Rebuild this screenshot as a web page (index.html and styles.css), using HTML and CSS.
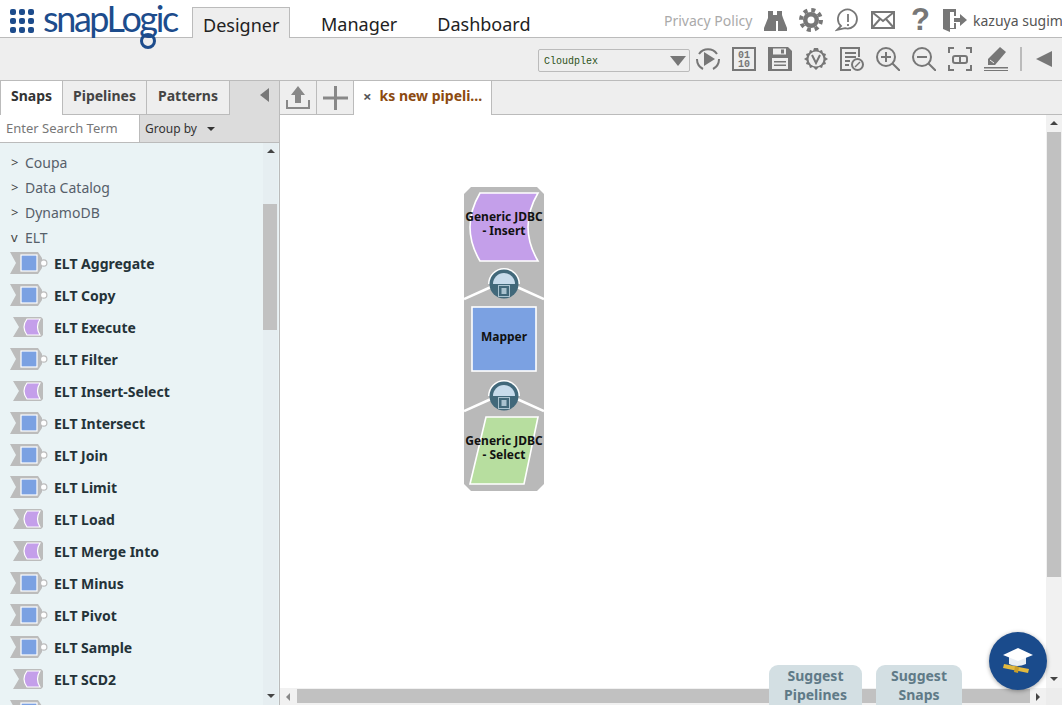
FILE: index.html
```html
<!DOCTYPE html>
<html lang="en">
<head>
<meta charset="utf-8">
<title>SnapLogic Designer</title>
<link rel="stylesheet" href="styles.css">
</head>
<body>
<svg class="defs" width="0" height="0">
  <defs>
    <symbol id="snap-blue" viewBox="0 0 38 24">
      <path d="M0 1H28L32 7V17L28 23H0L6 12Z" fill="#bcbcbc"/>
      <circle cx="33.700" cy="12" r="3.200" fill="#fff" stroke="#bcbcbc" stroke-width="1.200"/>
      <rect x="11" y="4" width="16" height="16" fill="#7ba1e2" stroke="#fff" stroke-width="1.200"/>
    </symbol>
    <symbol id="snap-purple" viewBox="0 0 38 24">
      <path d="M3 2H31L33 4V20L31 22H3L9 12Z" fill="#bcbcbc"/>
      <path d="M17 4H30Q25 12 30 20H17Q11 12 17 4Z" fill="#c49fea" stroke="#fff" stroke-width="1.200"/>
    </symbol>
  </defs>
</svg>

<header class="top">
  <div class="logo">
    <svg class="logo-dots" width="24" height="24" viewBox="0 0 24 24" fill="#1d4c8c">
      <rect x="0" y="0" width="6" height="6" rx="2"/><rect x="9" y="0" width="6" height="6" rx="2"/><rect x="18" y="0" width="6" height="6" rx="2"/>
      <rect x="0" y="9" width="6" height="6" rx="2"/><rect x="9" y="9" width="6" height="6" rx="2"/><rect x="18" y="9" width="6" height="6" rx="2"/>
      <rect x="0" y="18" width="6" height="6" rx="2"/><rect x="9" y="18" width="6" height="6" rx="2"/><rect x="18" y="18" width="6" height="6" rx="2"/>
    </svg>
    <span class="logo-word">snapLogic</span>
    <svg class="logo-ring" width="20" height="20" viewBox="0 0 20 20" fill="none" stroke="#1d4c8c" stroke-width="3"><circle cx="10" cy="10" r="6.500"/></svg>
  </div>
  <nav class="main-nav">
    <span class="main-tab active">Designer</span>
    <span class="main-tab manager">Manager</span>
    <span class="main-tab">Dashboard</span>
  </nav>
  <div class="top-right">
    <span class="privacy">Privacy Policy</span>
    <svg class="ic" width="24" height="24" viewBox="0 0 24 24" fill="#777"><path d="M5 3h5v4h4V3h5v4l1 3 4 10v3h-9V13h-2v10H1v-3l4-10z"/></svg>
    <svg class="ic" width="24" height="24" viewBox="0 0 24 24"><circle cx="12" cy="12" r="8" fill="#777"/><circle cx="12" cy="12" r="10" fill="none" stroke="#777" stroke-width="4" stroke-dasharray="4 3.850"/><circle cx="12" cy="12" r="3.500" fill="#fff"/></svg>
    <svg class="ic" width="24" height="24" viewBox="0 0 24 24" fill="none" stroke="#777" stroke-width="1.800"><path d="M6 18a9.500 9.500 0 1 1 4 2.200L2 22z"/><path d="M13 6v8M13 16v2"/></svg>
    <svg class="ic" width="24" height="24" viewBox="0 0 24 24" fill="none" stroke="#777" stroke-width="2"><rect x="1" y="4" width="22" height="16"/><path d="M1 4l11 9 11-9M1 20l8-9M23 20l-8-9"/></svg>
    <span class="qmark">?</span>
    <svg class="ic" width="24" height="24" viewBox="0 0 24 24" fill="#777"><path d="M0 1h13v7h-2V4H7v16h4v-5h2v6H7v3l-7-3z"/><path d="M11 10h6V6l7 6-7 6v-4h-6z"/></svg>
    <span class="user">kazuya sugimoto</span>
  </div>
</header>

<div class="toolbar">
  <div class="select"><span class="select-text">Cloudplex</span><i class="select-arrow"></i></div>
  <svg class="tool" viewBox="0 0 24 24" fill="none" stroke="#777" stroke-width="2"><path d="M3 7A11 11 0 0 1 21 7M23 12a11 11 0 0 1-6 10M7 22a11 11 0 0 1-6-10"/><path d="M8 5l11 7-11 7z" fill="#777" stroke="none"/></svg>
  <svg class="tool" viewBox="0 0 24 24"><rect x="1" y="1" width="22" height="22" fill="none" stroke="#777" stroke-width="2"/><text x="12" y="11" class="bin">01</text><text x="12" y="20" class="bin">10</text></svg>
  <svg class="tool" viewBox="0 0 24 24" fill="#777"><path d="M0 0h20l4 4v20H0z"/><rect x="5" y="1.500" width="13" height="6" fill="#eee"/><rect x="13" y="2.500" width="3" height="4" fill="#777"/><rect x="4" y="11" width="16" height="11" fill="#eee"/><path d="M6 14h12v1.500H6zM6 17.500h12V19H6z"/></svg>
  <svg class="tool" viewBox="0 0 24 24"><path d="M10 1h4l1 3 3-1 1 3 3 1-1 3 3 2-3 2 1 3-3 1-1 3-3-1-3 3-3-3-3 1-1-3-3-1 1-3-3-2 3-2-1-3 3-1 1-3 3 1z" fill="#777"/><circle cx="12" cy="12" r="7.500" fill="#eee"/><path d="M8 8l4 8 4-8" fill="none" stroke="#777" stroke-width="2"/></svg>
  <svg class="tool" viewBox="0 0 24 24" fill="none" stroke="#777" stroke-width="2"><path d="M11 23H1V1h18v9"/><path d="M5 6h11M5 10h11M5 14h5M5 18h4"/><circle cx="17.500" cy="17.500" r="5.500" fill="#eee"/><path d="M15 20l5-5" stroke-width="1.500"/></svg>
  <svg class="tool" viewBox="0 0 24 24" fill="none" stroke="#777" stroke-width="2"><circle cx="10" cy="10" r="9"/><path d="M10 5v10M5 10h10M16.500 16.500L24 24"/></svg>
  <svg class="tool" viewBox="0 0 24 24" fill="none" stroke="#777" stroke-width="2"><circle cx="10" cy="10" r="9"/><path d="M5 10h10M16.500 16.500L24 24"/></svg>
  <svg class="tool" viewBox="0 0 24 24" fill="none" stroke="#777" stroke-width="2"><path d="M1 6V1h5M18 1h5v5M23 18v5h-5M6 23H1v-5"/><rect x="5" y="9" width="14" height="7" rx="2"/><path d="M12 9v7"/></svg>
  <svg class="tool" viewBox="0 0 24 24" fill="#777"><path d="M16 0l6 5-11 13H4v-6z"/><path d="M0 20h24v1.500H0zM0 23h24v1H0z"/><path d="M6 13l4 3" stroke="#eee" stroke-width="1"/></svg>
  <span class="tool-sep"></span>
  <span class="tool-back"></span>
</div>

<main class="workspace">
  <aside class="panel">
    <div class="panel-tabs">
      <span class="panel-tab active">Snaps</span>
      <span class="panel-tab pipelines">Pipelines</span>
      <span class="panel-tab patterns">Patterns</span>
      <span class="panel-collapse"></span>
    </div>
    <div class="search-row">
      <span class="search">Enter Search Term</span>
      <span class="groupby">Group by <i class="mini-arrow"></i></span>
    </div>
    <div class="list-wrap">
      <ul class="list">
        <li class="cat"><span class="chev">&gt;</span>Coupa</li>
        <li class="cat"><span class="chev">&gt;</span>Data Catalog</li>
        <li class="cat"><span class="chev">&gt;</span>DynamoDB</li>
        <li class="cat"><span class="chev">v</span>ELT</li>
        <li class="snap"><svg class="snap-ic"><use href="#snap-blue"/></svg>ELT Aggregate</li>
        <li class="snap"><svg class="snap-ic"><use href="#snap-blue"/></svg>ELT Copy</li>
        <li class="snap"><svg class="snap-ic"><use href="#snap-purple"/></svg>ELT Execute</li>
        <li class="snap"><svg class="snap-ic"><use href="#snap-blue"/></svg>ELT Filter</li>
        <li class="snap"><svg class="snap-ic"><use href="#snap-purple"/></svg>ELT Insert-Select</li>
        <li class="snap"><svg class="snap-ic"><use href="#snap-blue"/></svg>ELT Intersect</li>
        <li class="snap"><svg class="snap-ic"><use href="#snap-blue"/></svg>ELT Join</li>
        <li class="snap"><svg class="snap-ic"><use href="#snap-blue"/></svg>ELT Limit</li>
        <li class="snap"><svg class="snap-ic"><use href="#snap-purple"/></svg>ELT Load</li>
        <li class="snap"><svg class="snap-ic"><use href="#snap-purple"/></svg>ELT Merge Into</li>
        <li class="snap"><svg class="snap-ic"><use href="#snap-blue"/></svg>ELT Minus</li>
        <li class="snap"><svg class="snap-ic"><use href="#snap-blue"/></svg>ELT Pivot</li>
        <li class="snap"><svg class="snap-ic"><use href="#snap-blue"/></svg>ELT Sample</li>
        <li class="snap"><svg class="snap-ic"><use href="#snap-purple"/></svg>ELT SCD2</li>
        <li class="snap"><svg class="snap-ic"><use href="#snap-blue"/></svg></li>
      </ul>
      <div class="list-scroll">
        <i class="arr up"></i>
        <i class="list-thumb"></i>
        <i class="arr down"></i>
      </div>
    </div>
  </aside>

  <section class="editor">
    <div class="doc-tabs">
      <span class="doc-btn">
        <svg width="26" height="24" viewBox="0 0 26 24" fill="#888"><path d="M13 0l7 9h-4v8h-6V9H6z"/><path d="M1 14v9h24v-9h-2v7H3v-7z"/></svg>
      </span>
      <span class="doc-btn">
        <svg width="25" height="24" viewBox="0 0 25 24" fill="#888"><rect x="11" y="0" width="3" height="24"/><rect x="0" y="10.500" width="25" height="3"/></svg>
      </span>
      <span class="doc-tab"><span class="doc-x">×</span>ks new pipeli...</span>
    </div>
    <div class="canvas-row">
      <div class="canvas">
        <svg class="pipeline" width="80" height="304" viewBox="0 0 80 304">
          <path d="M7 0H73L80 7V297L73 304H7L0 297V7Z" fill="#b9b9b9"/>
          <path d="M16 6H74Q54 40 74 74H16Q-4 40 16 6Z" fill="#c49fea" stroke="#fff" stroke-width="1.600"/>
          <text x="40" y="34" class="node-label">Generic JDBC</text>
          <text x="40" y="48" class="node-label">- Insert</text>
          <path d="M0 112L27 100M53 100L80 112" stroke="#fff" stroke-width="2.500"/>
          <path d="M24 97a16 16 0 0 1 32 0z" fill="#fff"/>
          <circle cx="40" cy="97" r="14.500" fill="#41687a"/>
          <path d="M29 97a11 11 0 0 1 22 0z" fill="#c7dbeb"/>
          <rect x="34.500" y="98.500" width="11" height="11" fill="#41687a" stroke="#a9c2cf"/>
          <rect x="37.500" y="101" width="5" height="6" fill="#a9c2cf"/>
          <rect x="8" y="120" width="64" height="64" fill="#7ba1e2" stroke="#fff" stroke-width="1.600"/>
          <text x="40" y="154" class="node-label">Mapper</text>
          <path d="M0 224L27 212M53 212L80 224" stroke="#fff" stroke-width="2.500"/>
          <path d="M24 209a16 16 0 0 1 32 0z" fill="#fff"/>
          <circle cx="40" cy="209" r="14.500" fill="#41687a"/>
          <path d="M29 209a11 11 0 0 1 22 0z" fill="#c7dbeb"/>
          <rect x="34.500" y="210.500" width="11" height="11" fill="#41687a" stroke="#a9c2cf"/>
          <rect x="37.500" y="213" width="5" height="6" fill="#a9c2cf"/>
          <path d="M22 230H74L60 297H6Z" fill="#b7de9f" stroke="#fff" stroke-width="1.600"/>
          <text x="40" y="258" class="node-label">Generic JDBC</text>
          <text x="40" y="272" class="node-label">- Select</text>
        </svg>
      </div>
      <div class="v-scroll">
        <i class="arr up"></i>
        <i class="v-thumb"></i>
        <i class="arr down"></i>
      </div>
    </div>
    <div class="h-scroll">
      <i class="arr left"></i>
      <i class="h-thumb"></i>
      <i class="arr right"></i>
      <i class="corner"></i>
    </div>
    <div class="suggest">
      <span class="suggest-btn pipe">Suggest<br>Pipelines</span>
      <span class="suggest-btn">Suggest<br>Snaps</span>
    </div>
    <div class="help">
      <svg width="32" height="28" viewBox="0 0 32 28"><path d="M2 17l25 5-1 4-25-5z" fill="#e2b93f"/><path d="M13 19l4 1-1 6-4-1z" fill="#c99e2a"/><path d="M7 9v8q8 4 17 0V9z" fill="#e8eef5"/><path d="M16 1L31 8 16 14 1 8z" fill="#fff"/></svg>
    </div>
  </section>
</main>
</body>
</html>
```
FILE: styles.css
```css
* { box-sizing: border-box; }
html, body { margin: 0; height: 705px; overflow: hidden; background: #fff; }
body { font-family: "Noto Sans", sans-serif; color: #222; display: flex; flex-direction: column; width: 1062px; }
.defs { display: block; height: 0; }
i { display: block; }

.top { height: 38px; flex: none; display: flex; align-items: flex-end; border-bottom: 1px solid #bbb; background: #fff; }
.logo { width: 192px; flex: none; position: relative; height: 37px; display: flex; padding-left: 10px; }
.logo-dots { margin-top: 9px; flex: none; }
.logo-word { font-family: "Lato", sans-serif; color: #1d4c8c; font-size: 36px; line-height: 37px; letter-spacing: -2.400px; margin-left: 9px; white-space: nowrap; }
.logo-ring { position: absolute; left: 138px; top: 31px; }
.main-nav { display: flex; align-items: flex-end; height: 31px; margin-bottom: -1px; }
.main-tab { font-size: 18px; line-height: 24px; padding: 5px 0 2px; color: #222; margin-left: 40px; }
.main-tab.active { width: 98px; height: 31px; background: #eee; border: 1px solid #bbb; border-bottom: 0; margin: 0; padding: 5px 0 0 10px; }
.main-tab.manager { margin-left: 31px; }
.top-right { margin-left: auto; display: flex; align-items: center; height: 37px; white-space: nowrap; overflow: hidden; width: 398px; flex: none; padding-top: 2px; align-self: flex-start; }
.privacy { font-size: 14px; color: #aaa; width: 99px; flex: none; padding-top: 2px; }
.ic { flex: none; margin-right: 12px; }
.qmark { font-size: 31px; font-weight: 700; color: #777; width: 16px; margin-right: 16px; line-height: 24px; font-family: "Liberation Sans", sans-serif; flex: none; margin-left: 4px; }
.user { font-size: 14px; color: #555; margin-left: -6px; padding-top: 2px; }

.toolbar { height: 43px; flex: none; background: #eee; display: flex; align-items: center; padding-left: 538px; gap: 12px; border-bottom: 1px solid #bbb; }
.select { width: 152px; height: 23px; background: #eee; border: 1px solid #bbb; border-radius: 2px; display: flex; align-items: center; justify-content: space-between; padding: 0 0 0 5px; font: 10px "Liberation Mono", monospace; color: #2c5218; margin-right: -6px; margin-top: 3px; flex: none; }
.select-text { padding-top: 1px; }
.select-arrow { width: 0; height: 0; border-left: 8px solid transparent; border-right: 8px solid transparent; border-top: 10px solid #777; margin-right: 3px; }
.tool { width: 24px; height: 24px; flex: none; }
.bin { font: 700 10px "Liberation Mono", monospace; fill: #777; text-anchor: middle; }
.tool-sep { width: 2px; height: 24px; background: #bbb; flex: none; margin-right: 2px; }
.tool-back { width: 0; height: 0; border-top: 8px solid transparent; border-bottom: 8px solid transparent; border-right: 16px solid #777; flex: none; }

.workspace { flex: 1; min-height: 0; display: flex; position: relative; }
.panel { width: 280px; flex: none; border-right: 1px solid #bbb; display: flex; flex-direction: column; min-height: 0; }
.panel-tabs { height: 34px; flex: none; display: flex; background: #dcdcdc; position: relative; }
.panel-tab { height: 34px; font-size: 14px; font-weight: 700; color: #444; display: flex; align-items: center; justify-content: center; background: #eee; border-right: 1px solid #bbb; border-bottom: 1px solid #bbb; padding-bottom: 5px; }
.panel-tab.active { width: 63px; background: #fff; border-bottom: 0; border-left: 1px solid #bbb; color: #333; }
.panel-tab.pipelines { width: 84px; }
.panel-tab.patterns { width: 83px; }
.panel-collapse { position: absolute; left: 260px; top: 7px; width: 0; height: 0; border-top: 7px solid transparent; border-bottom: 7px solid transparent; border-right: 9px solid #777; }
.search-row { height: 28px; flex: none; display: flex; border-bottom: 1px solid #bbb; }
.search { width: 140px; background: #fff; color: #777; font-size: 13px; line-height: 26px; padding-left: 6px; border-right: 1px solid #bbb; white-space: nowrap; }
.groupby { flex: 1; background: #dcdcdc; font-size: 12px; line-height: 27px; padding-left: 5px; display: flex; align-items: center; color: #333; }
.mini-arrow { width: 0; height: 0; border-left: 4px solid transparent; border-right: 4px solid transparent; border-top: 4px solid #333; margin-left: 10px; }

.list-wrap { flex: 1; min-height: 0; display: flex; background: #eaf3f5; }
.list { flex: 1; list-style: none; margin: 0; padding: 7px 0 0; overflow: hidden; }
.cat { height: 25px; font-size: 14px; line-height: 25px; padding-left: 11px; display: flex; white-space: nowrap; color: #56606a; }
.chev { width: 14px; font-size: 13px; color: #444; }
.snap { height: 32px; display: flex; align-items: center; font-size: 14px; font-weight: 700; color: #243238; padding-left: 10px; white-space: nowrap; }
.cat + .snap { margin-top: -3px; }
.snap-ic { width: 38px; height: 24px; margin-right: 6px; flex: none; }
.list-scroll { width: 15px; flex: none; margin-right: 1px; display: flex; flex-direction: column; align-items: center; background: #e6eef1; position: relative; }
.list-thumb { position: absolute; left: 0; top: 61px; width: 14px; height: 126px; background: #c1c1c1; }

.arr { width: 0; height: 0; flex: none; }
.arr.up { border-left: 4px solid transparent; border-right: 4px solid transparent; border-bottom: 4px solid #444; margin-top: 6px; }
.arr.down { border-left: 4px solid transparent; border-right: 4px solid transparent; border-top: 4px solid #444; margin-top: auto; margin-bottom: 7px; }
.arr.left { border-top: 4px solid transparent; border-bottom: 4px solid transparent; border-right: 4px solid #888; margin-left: 6px; }
.arr.right { border-top: 4px solid transparent; border-bottom: 4px solid transparent; border-left: 4px solid #444; margin-left: auto; margin-right: 6px; }

.editor { flex: 1; min-width: 0; display: flex; flex-direction: column; position: relative; }
.doc-tabs { height: 34px; flex: none; background: #eee; display: flex; border-bottom: 1px solid #bbb; }
.doc-btn { width: 37px; height: 33px; border-right: 1px solid #bbb; display: flex; align-items: center; justify-content: center; }
.doc-tab { width: 138px; height: 34px; background: #fff; border-right: 1px solid #bbb; font-size: 14px; font-weight: 700; color: #8c4a10; display: flex; align-items: center; white-space: nowrap; padding: 0 0 5px 9px; }
.doc-x { color: #555; font-weight: 700; margin-right: 8px; font-size: 15px; }
.canvas-row { flex: 1; min-height: 0; display: flex; }
.canvas { flex: 1; position: relative; background: #fff; }
.pipeline { position: absolute; left: 184px; top: 72px; }
.node-label { font-size: 12px; font-weight: 700; fill: #111; text-anchor: middle; font-family: "Noto Sans", sans-serif; }
.v-scroll { width: 16px; flex: none; background: #f1f1f1; display: flex; flex-direction: column; align-items: center; position: relative; }
.v-thumb { position: absolute; left: 1px; top: 17px; width: 14px; height: 445px; background: #c1c1c1; }
.h-scroll { height: 17px; flex: none; background: #f1f1f1; display: flex; align-items: center; position: relative; padding-right: 16px; }
.h-thumb { position: absolute; left: 17px; top: 1px; width: 733px; height: 14px; background: #c1c1c1; }
.corner { position: absolute; right: 0; top: 0; width: 16px; height: 17px; background: #ececec; }

.suggest { position: absolute; left: 489px; bottom: 0; display: flex; gap: 14px; }
.suggest-btn { height: 40px; width: 93px; background: #d3dfe3; border-radius: 9px 9px 0 0; font-size: 14px; font-weight: 700; line-height: 19px; color: #5f7a87; text-align: center; padding-top: 1px; overflow: hidden; }
.suggest-btn + .suggest-btn { width: 86px; }
.help { position: absolute; left: 709px; top: 551px; width: 58px; height: 58px; border-radius: 50%; background: #1a4b8c; box-shadow: 0 1px 4px rgba(0,0,0,.35); display: flex; align-items: center; justify-content: center; }
```
